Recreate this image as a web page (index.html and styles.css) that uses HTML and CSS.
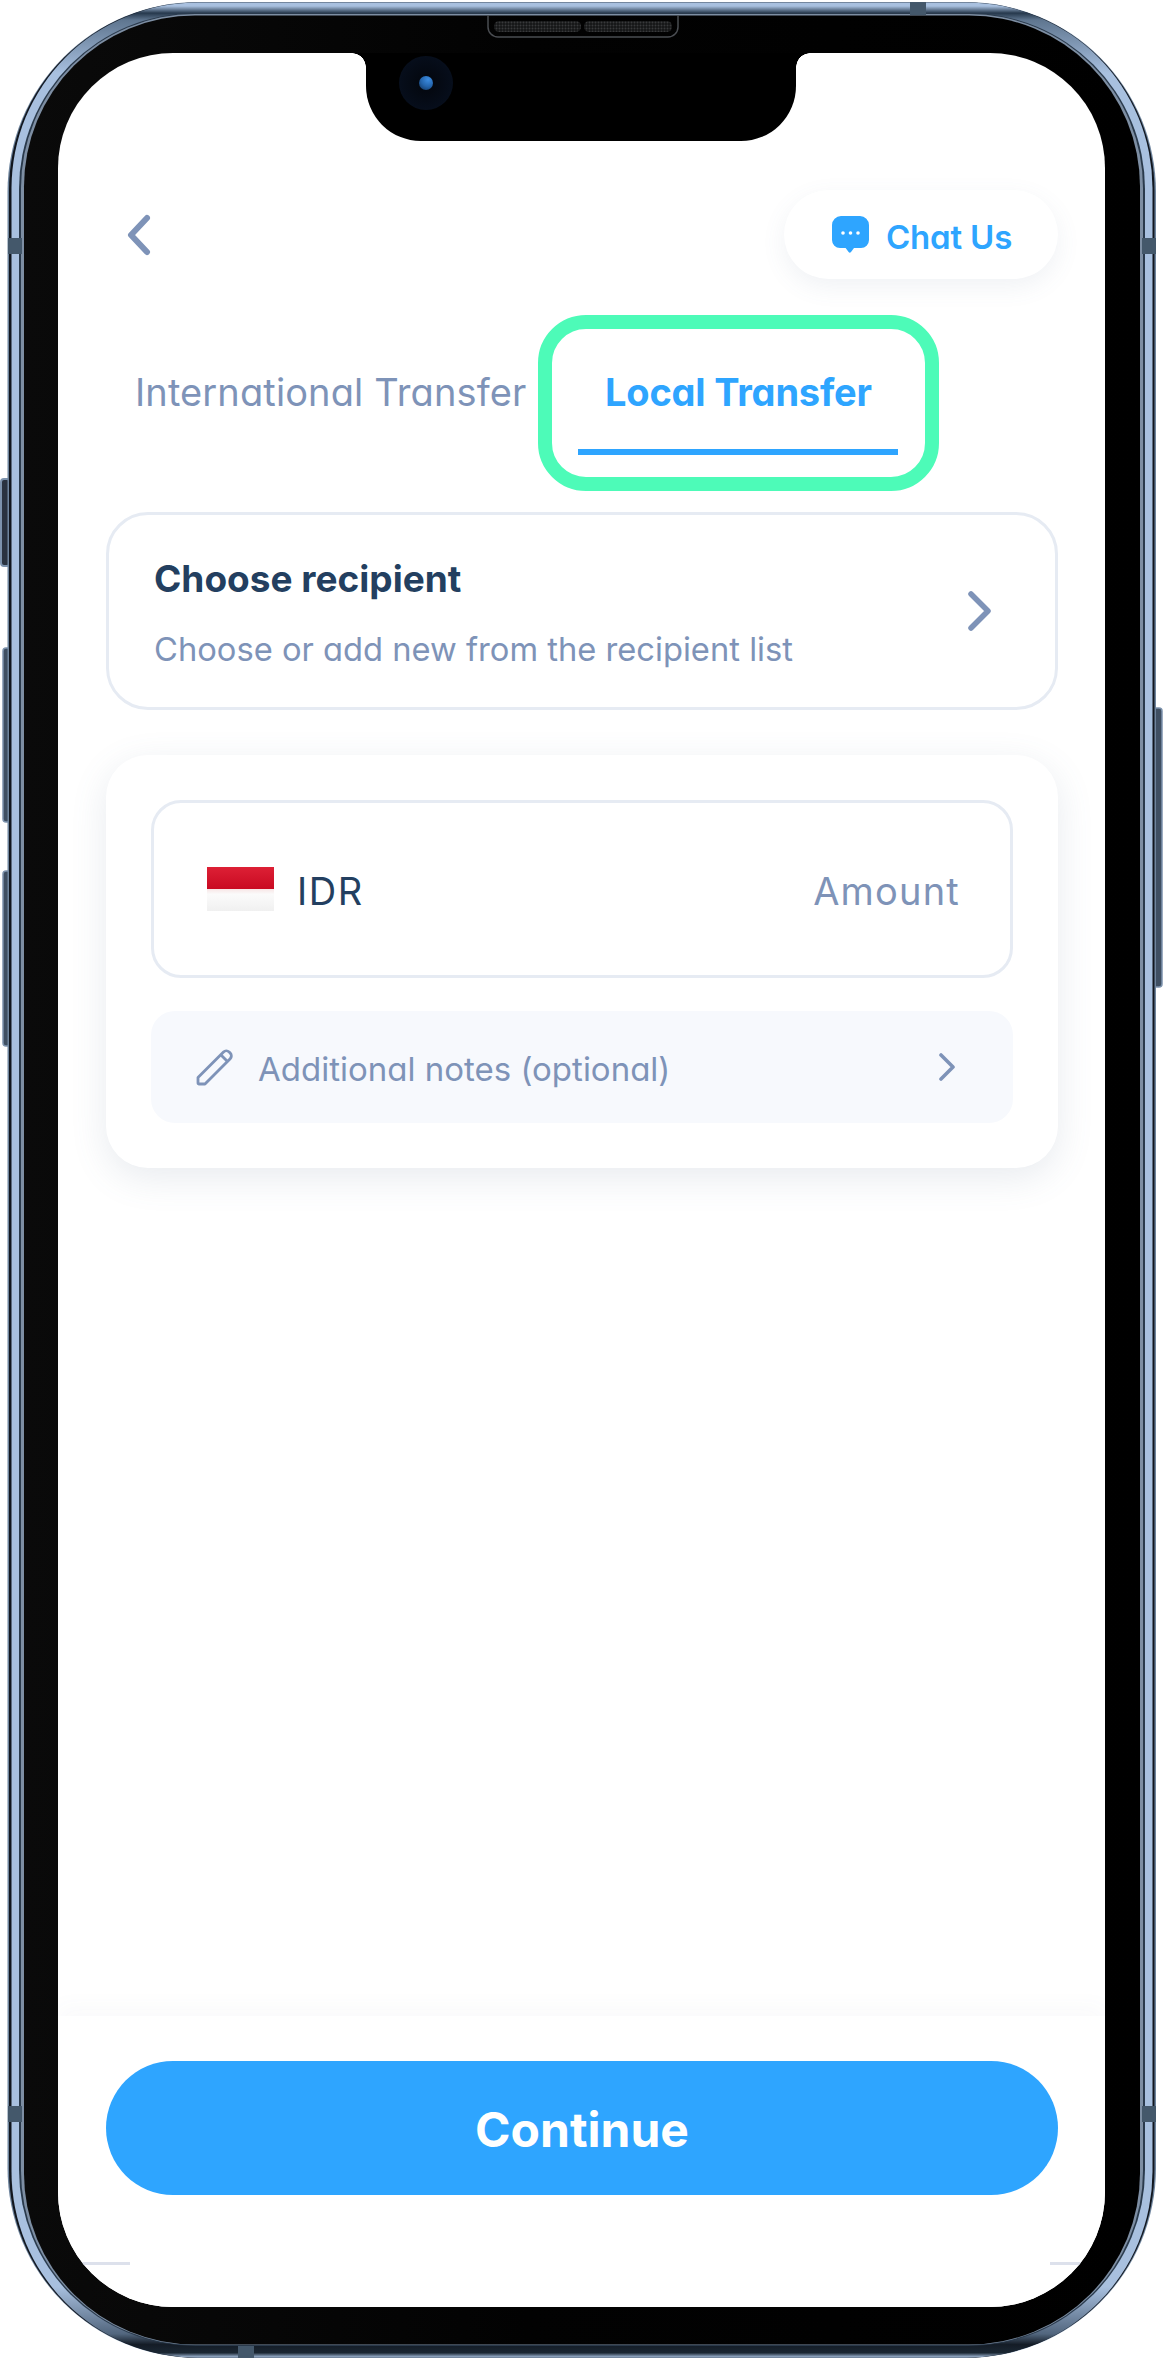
FILE: index.html
```html
<!DOCTYPE html>
<html lang="en">
<head>
<meta charset="utf-8">
<title>Local Transfer</title>
<link rel="stylesheet" href="styles.css">
</head>
<body>
<div class="phone">
  <svg class="hardware" viewBox="0 0 1163 2360" width="1163" height="2360" aria-hidden="true">
    <defs>
      <linearGradient id="bandV" x1="0" y1="0" x2="0" y2="1">
        <stop offset="0" stop-color="#a8c0df"/>
        <stop offset=".0015" stop-color="#a8c0df"/>
        <stop offset=".0045" stop-color="#26384c"/>
        <stop offset=".0075" stop-color="#5f7690"/>
        <stop offset=".03" stop-color="#a8c0df"/>
        <stop offset=".97" stop-color="#a8c0df"/>
        <stop offset=".99" stop-color="#52667e"/>
        <stop offset=".9945" stop-color="#141c26"/>
        <stop offset=".998" stop-color="#1b2733"/>
        <stop offset="1" stop-color="#a8c0df"/>
      </linearGradient>
      <linearGradient id="blackH" x1="0" y1="0" x2="1" y2="0">
        <stop offset="0" stop-color="#0a0a0a"/>
        <stop offset=".45" stop-color="#020202"/>
        <stop offset="1" stop-color="#000"/>
      </linearGradient>
      <pattern id="grille" width="3" height="3" patternUnits="userSpaceOnUse">
        <rect width="3" height="3" fill="#141516"/>
        <circle cx="1.500" cy="1.500" r="1" fill="#38393b"/>
      </pattern>
    </defs>
    <rect class="btn" x="1" y="479" width="9" height="87" rx="3"/>
    <rect class="btn-thin" x="3" y="648" width="7" height="174" rx="3"/>
    <rect class="btn-thin" x="3" y="871" width="7" height="175" rx="3"/>
    <rect class="btn-thin" x="1153" y="708" width="9" height="279" rx="3"/>
    <rect x="7.500" y="2" width="1148.500" height="2356" rx="190" fill="#6f859e"/>
    <rect x="9" y="2.500" width="1145.500" height="2355" rx="188" fill="#11161e"/>
    <rect x="11.500" y="2.500" width="1141" height="2355" rx="186" fill="url(#bandV)"/>
    <rect x="19" y="13" width="1126" height="2333" rx="176" fill="#2a3a4c"/>
    <rect x="21" y="14" width="1122" height="2331" rx="174" fill="#7d8ea3"/>
    <rect x="24" y="15.500" width="1116" height="2329" rx="171" fill="url(#blackH)"/>
    <rect class="ant" x="8" y="238" width="14" height="16"/>
    <rect class="ant" x="1142" y="238" width="14" height="16"/>
    <rect class="ant" x="910" y="2" width="16" height="13"/>
    <rect class="ant" x="238" y="2346" width="16" height="12"/>
    <rect class="ant" x="8" y="2106" width="14" height="16"/>
    <rect class="ant" x="1142" y="2106" width="14" height="16"/>
    <path d="M488 15v12a10 10 0 0 0 10 10h170a10 10 0 0 0 10-10V15" fill="none" stroke="#4a4d52" stroke-width="1.500"/>
    <rect x="494" y="21" width="87" height="11" rx="5" fill="url(#grille)"/>
    <rect x="584" y="21" width="88" height="11" rx="5" fill="url(#grille)"/>
  </svg>

  <main class="screen">
    <div class="notch">
      <span class="camera"><span class="lens"></span></span>
    </div>

    <div class="content">
      <header class="topbar">
        <svg class="back" viewBox="0 0 24 42" width="24" height="42" aria-hidden="true">
          <path d="M20 4 4 21l16 17" fill="none" stroke="#7e93b8" stroke-width="6" stroke-linecap="round" stroke-linejoin="round"/>
        </svg>
        <button class="chat" type="button">
          <svg viewBox="0 0 37 37" width="37" height="37" aria-hidden="true">
            <path d="M9 0h19a9 9 0 0 1 9 9v15a8 8 0 0 1-8 8h-7l-3 4a1.500 1.500 0 0 1-2.400 0l-3-4H8a8 8 0 0 1-8-8V9a9 9 0 0 1 9-9z" fill="#2ea5ff"/>
            <circle cx="11" cy="17" r="1.800" fill="#fff"/>
            <circle cx="18.500" cy="17" r="1.800" fill="#fff"/>
            <circle cx="26" cy="17" r="1.800" fill="#fff"/>
          </svg>
          <span class="chat-label">Chat Us</span>
        </button>
      </header>

      <nav class="tabs">
        <span class="tab">International Transfer</span>
        <span class="tab tab-active">Local Transfer</span>
      </nav>

      <section class="recipient">
        <div class="recipient-text">
          <h2 class="recipient-title">Choose recipient</h2>
          <p class="recipient-sub">Choose or add new from the recipient list</p>
        </div>
        <svg class="chev-lg" viewBox="0 0 24 42" width="24" height="42" aria-hidden="true">
          <path d="M4 4l17 17L4 38" fill="none" stroke="#7e93b8" stroke-width="5.500" stroke-linecap="round" stroke-linejoin="round"/>
        </svg>
      </section>

      <section class="panel">
        <div class="amount-field">
          <span class="flag"></span>
          <span class="currency">IDR</span>
          <span class="amount">Amount</span>
        </div>
        <div class="notes">
          <svg class="pencil" viewBox="0 0 38 38" width="38" height="38" aria-hidden="true">
            <path d="M2 35V29.500L27.500 4a4 4 0 0 1 5.600 0l1.100 1.100a4 4 0 0 1 0 5.600L9 36H3a1 1 0 0 1-1-1z" fill="none" stroke="#7e93b8" stroke-width="2.800" stroke-linejoin="round"/>
            <path d="M25 7l6.500 6.500" fill="none" stroke="#7e93b8" stroke-width="2.800"/>
          </svg>
          <span class="notes-label">Additional notes (optional)</span>
          <svg class="chev-sm" viewBox="0 0 16 28" width="16" height="28" aria-hidden="true">
            <path d="M2 2l12 12L2 26" fill="none" stroke="#7e93b8" stroke-width="3.600" stroke-linecap="round" stroke-linejoin="round"/>
          </svg>
        </div>
      </section>
    </div>

    <footer class="footer">
      <button class="continue" type="button"><span class="continue-label">Continue</span></button>
      <div class="home-lines"><span class="line-l"></span><span class="line-r"></span></div>
    </footer>
  </main>
</div>
</body>
</html>
```
FILE: styles.css
```css
* { box-sizing: border-box; }
html, body { margin: 0; padding: 0; background: #fff; }
body {
  font-family: "Inter", "Noto Sans", "Liberation Sans", sans-serif;
  font-feature-settings: "cv11" 1;
  color: #7e93b8;
}
.phone {
  position: relative;
  width: 1163px;
  height: 2360px;
  padding: 53px 58px 53px 58px;
  overflow: hidden;
}
.hardware { position: absolute; left: 0; top: 0; }
.btn { fill: #2a3340; stroke: #7d93ad; stroke-width: 2; }
.btn-thin { fill: #3f4f62; stroke: #7d93ad; stroke-width: 1.500; }
.ant { fill: #44586b; }

.screen {
  position: relative;
  height: 100%;
  background: #fff;
  border-radius: 115px;
  overflow: hidden;
  display: flex;
  flex-direction: column;
}
.notch {
  position: absolute;
  left: 308px;
  top: 0;
  width: 430px;
  height: 88px;
  background: #000;
  border-radius: 0 0 55px 55px;
}
.notch::before, .notch::after {
  content: "";
  position: absolute;
  top: 0;
  width: 14px;
  height: 14px;
}
.notch::before { left: -14px; background: radial-gradient(circle at 0 100%, transparent 13.500px, #000 14px); }
.notch::after { right: -14px; background: radial-gradient(circle at 100% 100%, transparent 13.500px, #000 14px); }
.camera {
  position: absolute;
  left: 33px;
  top: 3px;
  width: 54px;
  height: 54px;
  border-radius: 50%;
  background: radial-gradient(circle, #03060c 0, #060d1a 65%, #0a1426 100%);
  display: flex;
  align-items: center;
  justify-content: center;
}
.lens {
  width: 14px;
  height: 14px;
  border-radius: 50%;
  background: radial-gradient(circle at 65% 25%, #3c8ce0 0, #2465ad 50%, #0f2f55 100%);
}

.content { flex: 1; min-height: 0; }
.topbar {
  display: flex;
  align-items: center;
  justify-content: space-between;
  margin-top: 137px;
  padding: 0 47px 0 69px;
}
.back { display: block; }
.chat {
  display: flex;
  align-items: center;
  gap: 17px;
  width: 274px;
  height: 89px;
  padding: 0 0 0 48px;
  border: 0;
  border-radius: 45px;
  background: #fff;
  box-shadow: 0 8px 24px rgba(90, 110, 140, .09);
  color: #2ea5ff;
  font: inherit;
  font-size: 33px;
  font-weight: 600;
  letter-spacing: -.2px;
}
.chat-label { margin-top: 5px; }

.tabs {
  display: flex;
  align-items: flex-start;
  height: 126px;
  margin-top: 50px;
  padding-left: 77px;
}
.tab {
  font-size: 38px;
  line-height: 44px;
  letter-spacing: .12px;
  margin-top: 41px;
  white-space: nowrap;
}
.tab-active {
  position: relative;
  width: 320px;
  height: 126px;
  margin: 0 0 0 52px;
  padding-top: 41px;
  border-bottom: 6px solid #2ea5ff;
  color: #2ea5ff;
  font-weight: 700;
  letter-spacing: -.2px;
  text-align: center;
}
.tab-active::after {
  content: "";
  position: absolute;
  left: -40px;
  right: -41px;
  top: -14px;
  bottom: -42px;
  border: 14px solid #4dfbb8;
  border-radius: 48px;
}

.recipient {
  display: flex;
  align-items: center;
  justify-content: space-between;
  height: 198px;
  margin: 57px 47px 0 48px;
  padding: 0 64px 0 45px;
  border: 3px solid #e6ebf3;
  border-radius: 42px;
}
.recipient-text { margin-top: 3px; }
.recipient-title {
  margin: 0;
  color: #233f60;
  font-size: 37px;
  line-height: 46px;
  font-weight: 700;
}
.recipient-sub {
  margin: 27px 0 0;
  font-size: 32.700px;
  line-height: 40px;
}
.chev-lg { display: block; }

.panel {
  margin: 45px 47px 0 48px;
  padding: 45px;
  border-radius: 42px;
  background: #fff;
  box-shadow: 0 10px 36px rgba(90, 110, 140, .14);
}
.amount-field {
  display: flex;
  align-items: center;
  height: 178px;
  padding: 0 50px 0 53px;
  border: 3px solid #e6ebf3;
  border-radius: 30px;
}
.flag {
  width: 67px;
  height: 44px;
  background: linear-gradient(#dd2035 0, #c90a22 50%, #f7e6e6 50%, #fbfbfb 62%, #f0f0f0 100%);
}
.currency {
  margin: 3px 0 0 23px;
  color: #233f60;
  font-size: 38px;
  letter-spacing: 1.500px;
}
.amount {
  margin: 3px 0 0 auto;
  font-size: 38px;
  letter-spacing: 1.200px;
}
.notes {
  display: flex;
  align-items: center;
  height: 112px;
  margin-top: 33px;
  padding: 0 58px 0 45px;
  border-radius: 24px;
  background: #f7f9fd;
}
.notes-label {
  margin: 3px 0 0 24px;
  font-size: 33px;
}
.chev-sm { margin-left: auto; display: block; }

.footer {
  height: 291px;
  padding-top: 45px;
  box-shadow: 0 -10px 20px rgba(90, 110, 140, .03);
  background: #fff;
}
.continue {
  display: block;
  width: 952px;
  height: 134px;
  margin: 0 47px 0 48px;
  padding: 0;
  border: 0;
  border-radius: 67px;
  background: #2ea5ff;
  color: #fff;
  font: inherit;
  font-size: 48px;
  font-weight: 700;
}
.continue-label { display: block; margin-top: 2px; }
.home-lines {
  display: flex;
  justify-content: space-between;
  margin-top: 67px;
}
.line-l, .line-r {
  height: 3px;
  background: #dde1ec;
}
.line-l { width: 72px; }
.line-r { width: 55px; }
```
